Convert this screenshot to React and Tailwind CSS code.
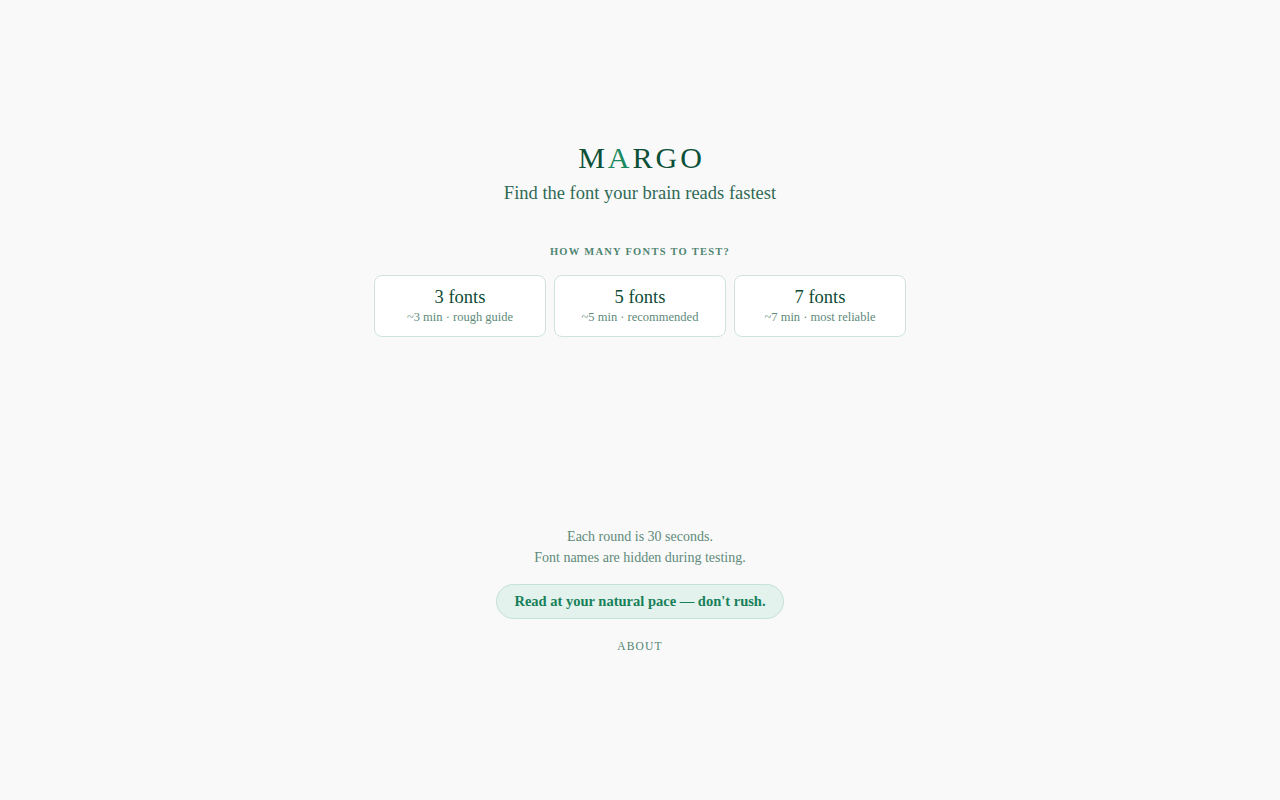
import React from "react";

const serif = { fontFamily: '"Liberation Serif", "DejaVu Serif", serif' };

function FontOption({ count, mins, note }) {
  return (
    <button className="w-[172px] h-[62px] bg-white border border-[#cfe3db] rounded-lg flex flex-col items-center justify-center">
      <span className="text-[18.5px] leading-5 text-[#0d4a35]">{count} fonts</span>
      <span className="text-[12.5px] leading-4 mt-[2px] text-[#5e8a7a]">
        ~{mins} min · {note}
      </span>
    </button>
  );
}

export default function App() {
  return (
    <div className="min-h-screen bg-[#f9f9f9] flex flex-col items-center" style={serif}>
      {/* header */}
      <h1 className="mt-[140px] text-[30px] leading-9 tracking-[0.1em] pl-[0.1em] text-[#0c5038]">
        M<span className="text-[#1b8a60]">A</span>RGO
      </h1>
      <p className="mt-[5px] text-[18.5px] leading-6 text-[#2f6a55]">
        Find the font your brain reads fastest
      </p>

      {/* choice */}
      <div className="mt-[39px] text-[10.5px] leading-4 font-bold uppercase tracking-[0.12em] text-[#4f8572]">
        How many fonts to test?
      </div>
      <div className="mt-[15px] flex gap-2">
        <FontOption count={3} mins={3} note="rough guide" />
        <FontOption count={5} mins={5} note="recommended" />
        <FontOption count={7} mins={7} note="most reliable" />
      </div>

      {/* info */}
      <div className="mt-[189px] text-center text-[14px] leading-[21px] text-[#5e8a7a]">
        <p>Each round is 30 seconds.</p>
        <p>Font names are hidden during testing.</p>
      </div>
      <div className="mt-[16px] w-[288px] h-[35px] rounded-full bg-[#e3f2ec] border border-[#c5e2d6] flex items-center justify-center text-[14.5px] font-bold text-[#17805a]">
        Read at your natural pace — don't rush.
      </div>
      <button className="mt-[19px] text-[11.5px] uppercase tracking-[0.1em] text-[#4f8572]">
        About
      </button>
    </div>
  );
}
